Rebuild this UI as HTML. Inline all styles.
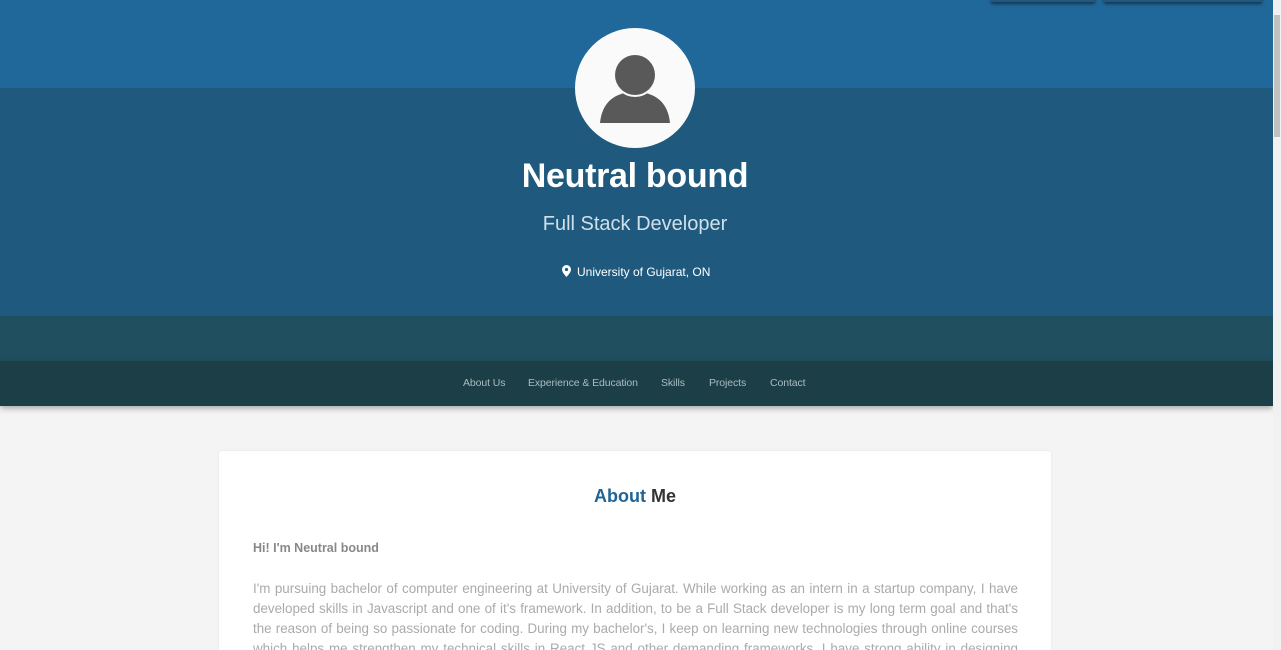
<!DOCTYPE html>
<html><head><meta charset="utf-8"><style>
*{margin:0;padding:0;box-sizing:border-box}
html,body{width:1281px;height:650px;overflow:hidden}
body{background:#f4f4f4;font-family:"Liberation Sans",sans-serif;position:relative}
.b1{position:absolute;left:0;top:0;width:1273px;height:88px;background:#21689a}
.b2{position:absolute;left:0;top:88px;width:1273px;height:228px;background:#1f5a7e}
.b3{position:absolute;left:0;top:316px;width:1273px;height:45px;background:#20505f}
.nav{position:absolute;left:0;top:361px;width:1273px;height:45px;background:#1c3f47;box-shadow:0 2px 6px rgba(0,0,0,.35)}
.nav span{position:absolute;top:16px;font-size:10.5px;color:#a9bcc0;letter-spacing:-0.1px}
.tab{position:absolute;top:-4px;height:6px;background:#1f5a7e;box-shadow:0 2px 3px rgba(0,0,0,.5)}
.sb{position:absolute;left:1273px;top:0;width:8px;height:650px;background:#f1f1f1}
.sb div{position:absolute;left:1px;top:15px;width:6px;height:122px;background:#c1c1c1}
.av{position:absolute;left:575px;top:28px;width:120px;height:120px;border-radius:50%;background:#fafafa}
h1{position:absolute;left:0;width:1270px;top:157px;text-align:center;color:#fff;font-size:34px;font-weight:bold;letter-spacing:-0.3px}
.sub{position:absolute;left:0;width:1270px;top:213px;text-align:center;color:#cfe0ea;font-size:20px;font-weight:300}
.loc{position:absolute;left:562px;top:265px;color:#fff;font-size:12px}
.card{position:absolute;left:219px;top:451px;width:832px;height:199px;background:#fff;border-radius:3px 3px 0 0;box-shadow:0 0 2px rgba(0,0,0,.08)}
.ttl{position:absolute;left:0;width:832px;text-align:center;font-size:18px;font-weight:bold;color:#333}
.hi{position:absolute;left:253px;top:541px;font-size:12.5px;font-weight:bold;color:#888}
.p{position:absolute;left:253px;top:579px;width:765px;font-size:13.4px;color:#aaa;line-height:20px}
.p div{text-align:justify;text-align-last:justify;white-space:nowrap;overflow:hidden}
</style></head><body>
<div class="b1"></div><div class="b2"></div><div class="b3"></div>
<div class="tab" style="left:991px;width:104px"></div>
<div class="tab" style="left:1104px;width:158px"></div>
<div class="nav">
<span style="left:463px">About Us</span>
<span style="left:528px">Experience &amp; Education</span>
<span style="left:661px">Skills</span>
<span style="left:709px">Projects</span>
<span style="left:770px">Contact</span>
</div>
<div class="av"><svg width="120" height="120" viewBox="0 0 120 120">
<path d="M25 95 C27 74 40 64 60 64 C80 64 93 74 95 95 Z" fill="#595959"/>
<circle cx="60" cy="47" r="22" fill="#fafafa"/>
<circle cx="60" cy="47" r="20" fill="#595959"/>
</svg></div>
<h1>Neutral bound</h1>
<div class="sub">Full Stack Developer</div>
<div class="loc"><svg width="9" height="12" viewBox="0 0 9 12" style="vertical-align:-1px;margin-right:6px"><path d="M4.5 0A4.5 4.5 0 0 0 0 4.5C0 7.5 4.5 12 4.5 12S9 7.5 9 4.5A4.5 4.5 0 0 0 4.5 0Z" fill="#fff"/><circle cx="4.5" cy="4.5" r="1.6" fill="#1f5a7e"/></svg>University of Gujarat, ON</div>
<div class="card"><div class="ttl" style="top:35px"><span style="color:#1f6497">About</span> Me</div></div>
<div class="hi">Hi! I'm Neutral bound</div>
<div class="p">
<div>I'm pursuing bachelor of computer engineering at University of Gujarat. While working as an intern in a startup company, I have</div>
<div>developed skills in Javascript and one of it's framework. In addition, to be a Full Stack developer is my long term goal and that's</div>
<div>the reason of being so passionate for coding. During my bachelor's, I keep on learning new technologies through online courses</div>
<div>which helps me strengthen my technical skills in React JS and other demanding frameworks. I have strong ability in designing</div>
</div>
<div class="sb"><div></div></div>
</body></html>
